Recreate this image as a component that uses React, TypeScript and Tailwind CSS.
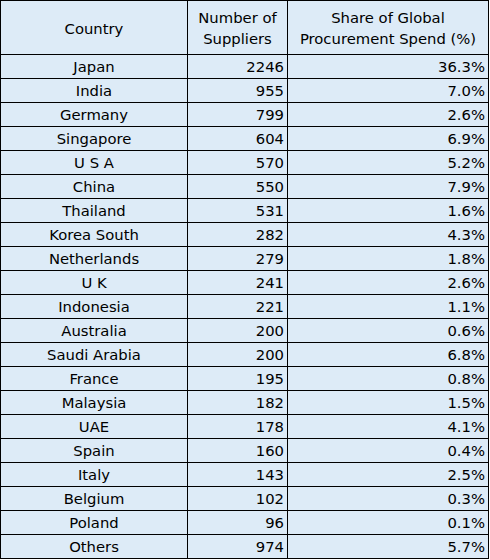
import React from "react";

const rows: [string, string, string][] = [
  ["Japan", "2246", "36.3%"],
  ["India", "955", "7.0%"],
  ["Germany", "799", "2.6%"],
  ["Singapore", "604", "6.9%"],
  ["U S A", "570", "5.2%"],
  ["China", "550", "7.9%"],
  ["Thailand", "531", "1.6%"],
  ["Korea South", "282", "4.3%"],
  ["Netherlands", "279", "1.8%"],
  ["U K", "241", "2.6%"],
  ["Indonesia", "221", "1.1%"],
  ["Australia", "200", "0.6%"],
  ["Saudi Arabia", "200", "6.8%"],
  ["France", "195", "0.8%"],
  ["Malaysia", "182", "1.5%"],
  ["UAE", "178", "4.1%"],
  ["Spain", "160", "0.4%"],
  ["Italy", "143", "2.5%"],
  ["Belgium", "102", "0.3%"],
  ["Poland", "96", "0.1%"],
  ["Others", "974", "5.7%"],
];

export default function App() {
  return (
    <div className="bg-white w-[490px] h-[560px]" style={{ fontFamily: '"DejaVu Sans", Verdana, sans-serif' }}>
      <div className="grid grid-cols-[187px_100px_201px] w-[489px] border-l border-t border-black bg-[#ddebf7] text-[14.8px] text-black">
        <div className="h-[54px] pt-[1px] border-r border-b border-black flex items-center justify-center text-center leading-[21px]">Country</div>
        <div className="h-[54px] pt-[1px] border-r border-b border-black flex items-center justify-center text-center leading-[21px]">
          Number of<br />Suppliers
        </div>
        <div className="h-[54px] pt-[1px] border-r border-b border-black flex items-center justify-center text-center leading-[21px]">
          Share of Global<br />Procurement Spend (%)
        </div>
        {rows.map(([c, n, s]) => (
          <React.Fragment key={c}>
            <div className="h-[24px] pt-[2px] border-r border-b border-black flex items-center justify-center leading-none">{c}</div>
            <div className="h-[24px] pt-[2px] border-r border-b border-black flex items-center justify-end pr-[3px] leading-none">{n}</div>
            <div className="h-[24px] pt-[2px] border-r border-b border-black flex items-center justify-end pr-[3px] leading-none">{s}</div>
          </React.Fragment>
        ))}
      </div>
    </div>
  );
}
